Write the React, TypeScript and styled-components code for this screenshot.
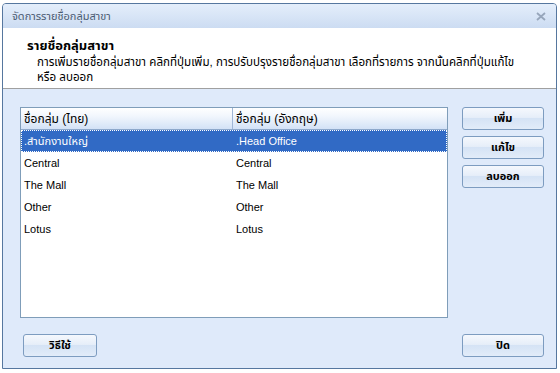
import styled, { createGlobalStyle } from "styled-components"

const GlobalStyle = createGlobalStyle`
    html, body {
        margin: 0;
        padding: 0;
        background: #ffffff;
    }
    body {
        font-family: Tahoma, "Liberation Sans", "Noto Sans Thai", "DejaVu Sans", sans-serif;
        font-size: 11px;
        color: #000;
    }
`

const Page = styled.div`
    padding: 3px 0 0 2px;
`

const Window = styled.div`
    width: 553px;
    height: 364px;
    border: 1px solid #56779f;
    border-radius: 4px 4px 0 0;
    display: flex;
    flex-direction: column;
    background: #dfeafa;
    overflow: hidden;
`

const TitleBar = styled.div`
    height: 24px;
    display: flex;
    align-items: center;
    justify-content: space-between;
    padding: 0 10px 0 9px;
    background: linear-gradient(#e4eefb, #ccdcf2);
    color: #4b5b72;
`

const Header = styled.div`
    background: #ffffff;
    border-bottom: 1px solid #a0a0a0;
    padding: 10px 0 0 24px;
    box-sizing: border-box;
    height: 61px;
`

const Heading = styled.div`
    font-weight: bold;
    font-size: 13px;
    line-height: 15px;
`

const Description = styled.div`
    padding-left: 10px;
    font-size: 11.6px;
    line-height: 15px;
    margin-top: 1px;
`

const Body = styled.div`
    flex: 1;
    display: flex;
    flex-direction: column;
    padding: 18px 12px 11px 17px;
    gap: 16px;
`

const MainRow = styled.div`
    display: flex;
    gap: 14px;
`

const ListBox = styled.div`
    width: 426px;
    height: 209px;
    border: 1px solid #7f9db9;
    background: #ffffff;
`

const Row = styled.div<{ $header?: boolean; $selected?: boolean }>`
    display: grid;
    grid-template-columns: 212px 1fr;
    height: 22px;
    align-items: center;
    box-sizing: border-box;
    font-size: ${p => p.$header ? "12px" : "11px"};
    background: ${p => p.$header ? "linear-gradient(#ffffff, #f1f6fd 40%, #d3e2f6)" : p.$selected ? "#316ac5" : "transparent"};
    color: ${p => p.$selected ? "#ffffff" : "#000"};
    border-bottom: ${p => p.$header ? "1px solid #8ea9cc" : "none"};
    outline: ${p => p.$selected ? "1px dotted #ffffff" : "none"};
    outline-offset: -1px;
`

const Cell = styled.div<{ $divider?: boolean }>`
    padding-left: 3px;
    height: 100%;
    display: flex;
    align-items: center;
    white-space: nowrap;
    border-right: ${p => p.$divider ? "1px solid #9fb6d6" : "none"};
`

const SideButtons = styled.div`
    display: flex;
    flex-direction: column;
    gap: 6px;
`

const Button = styled.button<{ $width?: number }>`
    width: ${p => p.$width ?? 82}px;
    height: 23px;
    border: 1px solid #7d9cc0;
    border-radius: 3px;
    background: linear-gradient(#f5f8fd, #e6eef9 45%, #d5e3f5 50%, #e2ecf9);
    font-family: inherit;
    font-size: 11px;
    font-weight: bold;
    color: #000;
    padding: 0;
`

const Footer = styled.div`
    display: flex;
    justify-content: space-between;
    padding-left: 3px;
`

const rows = [
    [".สำนักงานใหญ่", ".Head Office"],
    ["Central", "Central"],
    ["The Mall", "The Mall"],
    ["Other", "Other"],
    ["Lotus", "Lotus"],
]

const CloseIcon = () => (
    <svg width="10" height="9" viewBox="0 0 10 9">
        <path d="M1 1 L9 8 M9 1 L1 8" stroke="#97a6bb" strokeWidth="1.8" />
    </svg>
)

export default function App() {
    return (
        <Page>
            <GlobalStyle />
            <Window>
                <TitleBar>
                    <span>จัดการรายชื่อกลุ่มสาขา</span>
                    <CloseIcon />
                </TitleBar>
                <Header>
                    <Heading>รายชื่อกลุ่มสาขา</Heading>
                    <Description>
                        การเพิ่มรายชื่อกลุ่มสาขา คลิกที่ปุ่มเพิ่ม, การปรับปรุงรายชื่อกลุ่มสาขา เลือกที่รายการ จากนั้นคลิกที่ปุ่มแก้ไข
                        <br />
                        หรือ ลบออก
                    </Description>
                </Header>
                <Body>
                    <MainRow>
                        <ListBox>
                            <Row $header>
                                <Cell $divider>ชื่อกลุ่ม (ไทย)</Cell>
                                <Cell>ชื่อกลุ่ม (อังกฤษ)</Cell>
                            </Row>
                            {rows.map((r, i) => (
                                <Row key={i} $selected={i === 0}>
                                    <Cell>{r[0]}</Cell>
                                    <Cell>{r[1]}</Cell>
                                </Row>
                            ))}
                        </ListBox>
                        <SideButtons>
                            <Button>เพิ่ม</Button>
                            <Button>แก้ไข</Button>
                            <Button>ลบออก</Button>
                        </SideButtons>
                    </MainRow>
                    <Footer>
                        <Button $width={74}>วิธีใช้</Button>
                        <Button>ปิด</Button>
                    </Footer>
                </Body>
            </Window>
        </Page>
    )
}
